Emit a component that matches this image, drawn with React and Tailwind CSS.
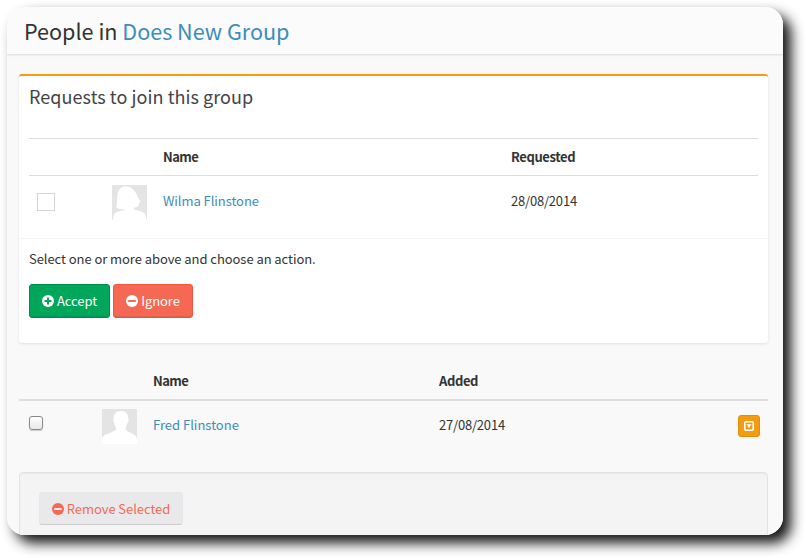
function CircleIcon({ plus, hole }) {
  return (
    <svg viewBox="0 0 12 12" className="h-3 w-3 shrink-0">
      <circle cx="6" cy="6" r="6" fill="currentColor" />
      <path d={plus ? 'M2.5 6H9.5M6 2.5V9.5' : 'M2.2 6H9.8'} stroke={hole} strokeWidth="2" />
    </svg>
  );
}

function Avatar({ female }) {
  return (
    <svg viewBox="0 0 35 35" className="h-[35px] w-[35px] shrink-0">
      <rect width="35" height="35" fill="#e4e4e4" />
      {female ? (
        <path
          fill="#fff"
          d="M9 2.8C11 1 17 .9 19.5 3C22.5 5.5 24.5 8.5 25.5 11.5C26.2 13.4 27.5 14.6 28.4 15.8C27.8 18 26.5 18.6 26.8 20.5C25.5 22.3 23.5 22.6 21.8 22.6V24C24 25.8 29.5 25.8 32 27.8C33.7 29.5 34.2 32.5 34.5 35H.8C1.1 31 2 28.5 4.7 27C8 25.6 11.5 25.9 12.8 24.7L12.5 24.2C9.5 24.6 5.5 24.2 4 22C5.3 20 5 16 5.2 12C5.4 8 6.6 5 9 2.8Z"
        />
      ) : (
        <path
          fill="#fff"
          d="M19 2C23.7 2 26.5 5 26.2 9.5C27 10.5 26.5 13.5 25.4 14C24.9 16 24.2 17.6 23.7 18.3V20.5C25 23 30.5 24 33.2 26.5C34.3 28 34.7 29.5 35 30.5V35H0V29.5C1 25.8 6 24.6 9 23.4C12 22.4 13.6 21.5 14.2 20.3V18.5C13.1 17.3 12.6 15.5 12.4 14C11.1 13 11 10.5 11.7 9.5C11.5 5 14 2 19 2Z"
        />
      )}
    </svg>
  );
}

export default function App() {
  return (
    <div className="h-[558px] w-[806px] overflow-hidden bg-white pl-[7px] pt-[7px] font-['Noto_Sans_CJK_SC',sans-serif] text-[13px] leading-5 tracking-[-0.06px] text-[#333]">
      <div className="h-[528px] w-[776px] rounded-[18px] shadow-[8px_8px_13px_#151515]">
        <div className="flex h-full flex-col overflow-hidden rounded-[18px] bg-[#f9f9f9]">
          <header className="z-10 flex h-[47px] shrink-0 items-center bg-[#fbfbfb] pl-[17px] pt-px shadow-[0_1px_2px_rgba(0,0,0,0.13)]">
            <h1 className="whitespace-pre text-[21.6px] leading-6 tracking-[-0.01px]">
              People in <a className="text-[#3c8dbc]">Does New Group</a>
            </h1>
          </header>

          <main className="flex flex-col pl-3 pr-[15px] pt-5">
            <section className="h-[269px] rounded-[3px] border-t-2 border-[#f39c12] bg-white shadow-[0_1px_3px_rgba(0,0,0,0.1)]">
              <div className="h-[62px] px-[10px] pt-2 text-[18px] leading-6 tracking-[0.06px] text-[#444]">Requests to join this group</div>
              <div className="mx-[10px] border-t border-[#ddd]">
                <div className="flex h-[37px] items-center border-b border-[#ddd] font-bold tracking-[-0.4px]">
                  <span className="ml-[134px] w-[348px] tracking-[-0.6px]">Name</span>
                  <span>Requested</span>
                </div>
                <div className="flex h-[62px] items-start">
                  <span className="ml-2 mt-[17px] h-[18px] w-[18px] border border-[#d5d5d5] bg-white" />
                  <span className="ml-[57px] mt-[9px]"><Avatar female /></span>
                  <a className="ml-4 mt-[15px] w-[348px] text-[#3c8dbc]">Wilma Flinstone</a>
                  <span className="mt-[15px] tracking-[-0.2px]">28/08/2014</span>
                </div>
              </div>
              <div className="border-t border-[#f4f4f4] px-[10px] pt-[10px]">
                <p>Select one or more above and choose an action.</p>
                <div className="mt-[15px] flex gap-[3px]">
                  <button className="flex h-[34px] w-[81px] items-center justify-center gap-[3px] rounded-[3px] border border-[#008d4c] bg-[#00a65a] text-white shadow-[inset_0_-1px_0_rgba(0,0,0,0.09)]">
                    <CircleIcon plus hole="#00a65a" />Accept
                  </button>
                  <button className="flex h-[34px] w-[80px] items-center justify-center gap-[3px] rounded-[3px] border border-[#f4543c] bg-[#f56954] text-white shadow-[inset_0_-1px_0_rgba(0,0,0,0.09)]">
                    <CircleIcon hole="#f56954" />Ignore
                  </button>
                </div>
              </div>
            </section>

            <section className="mt-5">
              <div className="flex h-[38px] items-center border-b-2 border-[#ddd] font-bold tracking-[-0.4px]">
                <span className="ml-[134px] w-[286px] tracking-[-0.6px]">Name</span>
                <span>Added</span>
              </div>
              <div className="flex h-[71px] items-start">
                <span className="ml-[10px] mt-[15px] h-[14px] w-[14px] rounded-[3px] border border-[#888] bg-linear-to-b from-white to-[#e8e8e8] shadow-[0_1px_1px_#ccc]" />
                <span className="ml-[59px] mt-2"><Avatar /></span>
                <a className="ml-4 mt-[14px] w-[286px] tracking-normal text-[#3c8dbc]">Fred Flinstone</a>
                <span className="mt-[14px] tracking-[-0.2px]">27/08/2014</span>
                <button className="ml-auto mr-2 mt-[14px] flex h-[22px] w-[22px] items-center justify-center rounded-[3px] border border-[#e08e0b] bg-[#f39c12] text-white">
                  <svg viewBox="0 0 10 10" className="h-[10px] w-[10px]" fill="none">
                    <rect x=".8" y=".8" width="8.4" height="8.4" rx="1" stroke="currentColor" strokeWidth="1.6" />
                    <path d="M2.5 3.3H7.5L5 6.9Z" fill="currentColor" />
                  </svg>
                </button>
              </div>
            </section>

            <section className="h-[90px] rounded-t-[4px] border border-[#e3e3e3] bg-[#f4f4f4] pl-[19px] pt-[19px] shadow-[inset_0_1px_1px_rgba(0,0,0,0.05)]">
              <button className="flex h-[33px] w-[144px] items-center justify-center gap-[3px] rounded-[3px] border border-b-[#ccc] border-x-[#e7e7e9] border-t-[#e7e7e9] bg-[#e9e9eb] text-[#f56954]">
                <CircleIcon hole="#e9e9eb" />Remove Selected
              </button>
            </section>
          </main>
        </div>
      </div>
    </div>
  );
}
